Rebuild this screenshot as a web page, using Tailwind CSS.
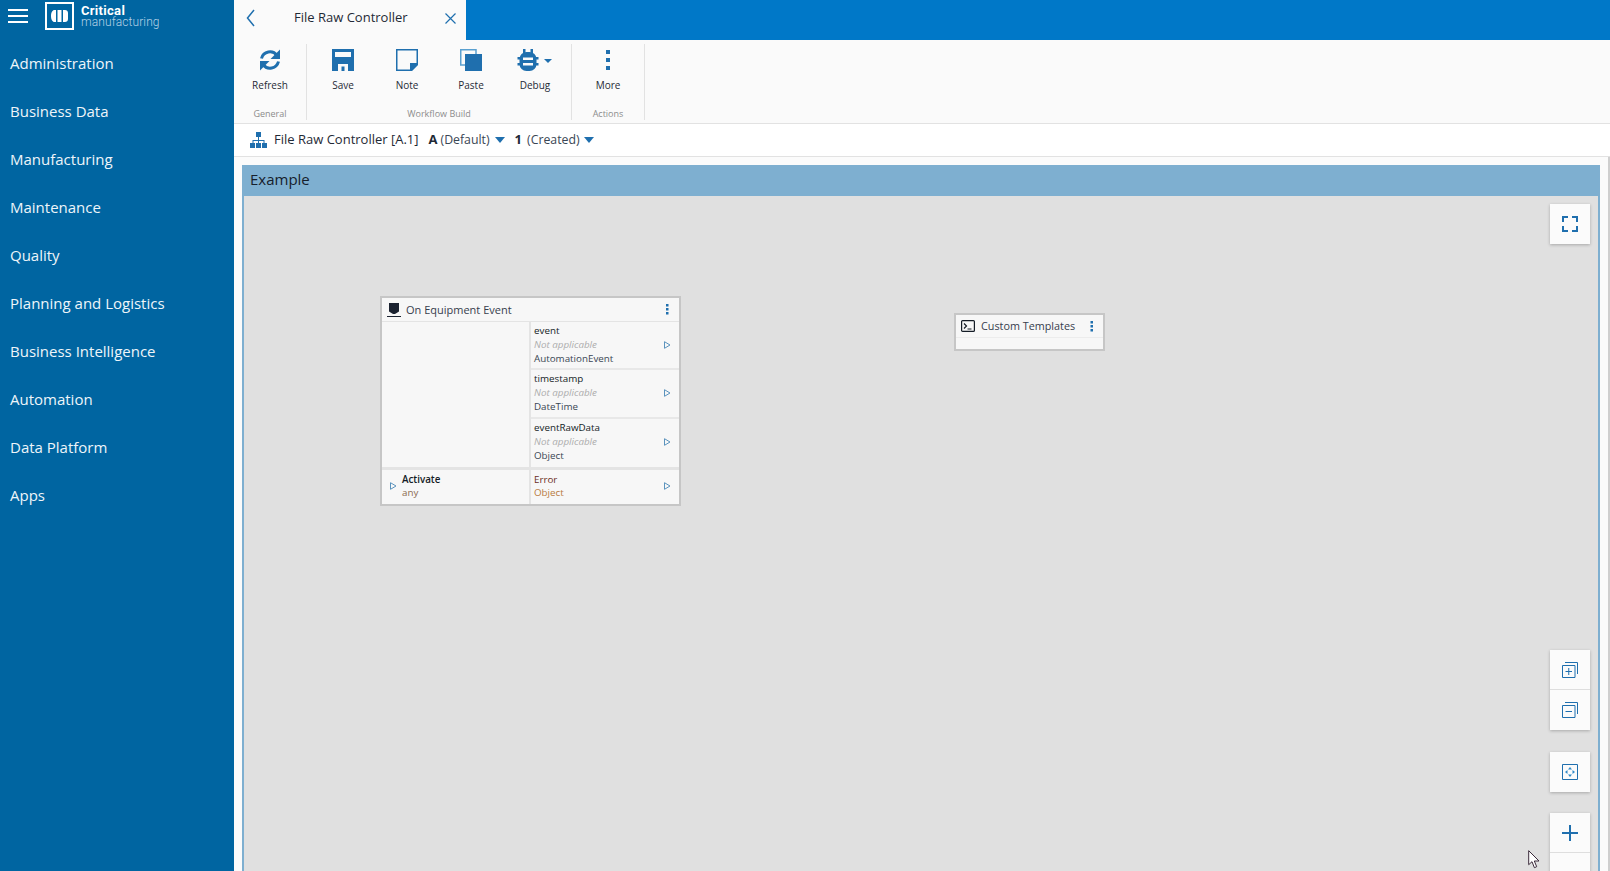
<!DOCTYPE html>
<html lang="en">
<head>
    <meta charset="UTF-8">
    <title>File Raw Controller</title>
    <script src="https://cdn.jsdelivr.net/npm/@tailwindcss/browser@4"></script>
</head>
<body class="bg-[#fafafa] text-[#1f2a36] font-['Open_Sans',sans-serif] overflow-hidden">
<div class="flex h-[871px] w-[1610px] overflow-hidden">

    <!-- Sidebar -->
    <aside class="w-[234px] shrink-0 bg-[#0065a1] text-white">
        <div class="h-[39px] flex items-start">
            <div class="w-[45px] pl-2 pt-[9px] flex flex-col gap-1">
                <span class="block w-5 h-0.5 bg-white"></span>
                <span class="block w-5 h-0.5 bg-white"></span>
                <span class="block w-5 h-0.5 bg-white"></span>
            </div>
            <div class="mt-0.5 w-[29px] h-[28px] border-2 border-white flex items-center justify-center">
                <svg width="17" height="12" viewBox="0 0 17 12" fill="#fff"><path d="M5 0v12H3.500C1.500 12 0 9.500 0 6s1.500-6 3.500-6zM6.500 0h4v12h-4zM12 0h2c1.800 0 3 1 3 3v6c0 2-1.200 3-3 3h-2z"/></svg>
            </div>
            <div class="ml-[7px] mt-[5px]">
                <div class="text-[13px] leading-[11px] font-bold font-['Roboto',sans-serif] tracking-[0.3px]">Critical</div>
                <div class="text-[12px] leading-3 font-light font-['Roboto',sans-serif] text-[#b5d2e6] tracking-[0.1px]">manufacturing</div>
            </div>
        </div>
        <nav class="text-[15px] text-[#eef5fa]">
            <a class="flex items-center pl-2.5 h-12">Administration</a>
            <a class="flex items-center pl-2.5 h-12">Business Data</a>
            <a class="flex items-center pl-2.5 h-12">Manufacturing</a>
            <a class="flex items-center pl-2.5 h-12">Maintenance</a>
            <a class="flex items-center pl-2.5 h-12">Quality</a>
            <a class="flex items-center pl-2.5 h-12">Planning and Logistics</a>
            <a class="flex items-center pl-2.5 h-12">Business Intelligence</a>
            <a class="flex items-center pl-2.5 h-12">Automation</a>
            <a class="flex items-center pl-2.5 h-12">Data Platform</a>
            <a class="flex items-center pl-2.5 h-12">Apps</a>
        </nav>
    </aside>

    <!-- Main -->
    <main class="flex-1 min-w-0 flex flex-col">
        <!-- Tab bar -->
        <div class="h-10 shrink-0 bg-[#0078c8]">
            <div class="w-[232px] h-10 pb-1 bg-[#fafafa] flex items-center">
                <svg class="ml-3" width="9" height="18" viewBox="0 0 9 18" fill="none" stroke="#1f6fae" stroke-width="1.500"><path d="M8 1L1.500 9 8 17"/></svg>
                <span class="ml-[39px] text-[13px]">File Raw Controller</span>
                <svg class="ml-[37px]" width="11" height="11" viewBox="0 0 11 11" fill="none" stroke="#1f6fae" stroke-width="1.200"><path d="M.5.500l10 10M10.500.500l-10 10"/></svg>
            </div>
        </div>

        <!-- Ribbon -->
        <div class="h-[84px] shrink-0 border-b border-[#e2e2e2] flex pt-1">
            <div class="px-1 border-r border-[#e2e2e2] h-[76px] flex flex-col">
                <div class="flex">
                    <div class="w-16 flex flex-col items-center">
                        <svg class="mt-1" width="24" height="24" viewBox="0 0 24 24" fill="none" stroke="#1f6fae" stroke-width="3"><path d="M3.500 10.500A8.700 8.700 0 0 1 19 7.500"/><path fill="#1f6fae" stroke="none" d="M22 1.500V11h-9.500z"/><path d="M20.500 13.500A8.700 8.700 0 0 1 5 16.500"/><path fill="#1f6fae" stroke="none" d="M2 22.500V13h9.500z"/></svg>
                        <span class="mt-1.5 text-[10px] leading-[14px]">Refresh</span>
                    </div>
                </div>
                <span class="mt-auto text-center text-[9px] leading-3 text-[#8c8c8c]">General</span>
            </div>
            <div class="px-1 border-r border-[#e2e2e2] h-[76px] flex flex-col">
                <div class="flex">
                    <div class="w-16 flex flex-col items-center">
                        <svg class="mt-1" width="24" height="24" viewBox="0 0 24 24"><path fill="#1f6fae" d="M1 1h22v22H1z"/><path fill="#fafafa" d="M4 4h16v5H4zM7 16h10v7H7z"/><path fill="#1f6fae" d="M10.500 18.500h3v4.500h-3z"/></svg>
                        <span class="mt-1.5 text-[10px] leading-[14px]">Save</span>
                    </div>
                    <div class="w-16 flex flex-col items-center">
                        <svg class="mt-1" width="24" height="24" viewBox="0 0 24 24" fill="none"><path stroke="#1f6fae" stroke-width="1.500" d="M1.750 1.750h20.500v14.500l-6 6H1.750z"/><path fill="#1f6fae" d="M23 15v2l-6 6h-2v-8z"/></svg>
                        <span class="mt-1.5 text-[10px] leading-[14px]">Note</span>
                    </div>
                    <div class="w-16 flex flex-col items-center">
                        <svg class="mt-1" width="24" height="24" viewBox="0 0 24 24"><path fill="none" stroke="#5aa0d0" stroke-width="1.500" d="M6 17H1.750V1.750H17V6"/><path fill="#1f6fae" d="M6 6h17v17H6z"/></svg>
                        <span class="mt-1.5 text-[10px] leading-[14px]">Paste</span>
                    </div>
                    <div class="w-16 flex flex-col items-center">
                        <div class="flex items-start">
                            <svg class="mt-1 ml-[-3px]" width="24" height="24" viewBox="0 0 24 24" fill="#1f6fae"><rect x="3.500" y="4" width="17" height="19" rx="7"/><path d="M7 1h2.500v4H7zM14.500 1H17v4h-2.500zM1.500 9h3v2.500h-3zM19.500 9h3v2.500h-3zM1.500 15h3v2.500h-3zM19.500 15h3v2.500h-3z"/><path fill="#fafafa" d="M7 9.500h10v2.500H7zM7 15h10v2.500H7z"/></svg>
                            <svg class="mt-[15px] ml-1" width="8" height="4" viewBox="0 0 8 4" fill="#1f6fae"><path d="M0 0h8L4 4z"/></svg>
                        </div>
                        <span class="mt-1.5 text-[10px] leading-[14px]">Debug</span>
                    </div>
                </div>
                <span class="mt-auto text-center text-[9px] leading-3 text-[#8c8c8c]">Workflow Build</span>
            </div>
            <div class="px-1 border-r border-[#e2e2e2] h-[76px] flex flex-col">
                <div class="flex">
                    <div class="w-16 flex flex-col items-center">
                        <svg class="mt-1" width="24" height="24" viewBox="0 0 24 24" fill="#1f6fae"><path d="M10 2h4v4h-4zM10 10h4v4h-4zM10 18h4v4h-4z"/></svg>
                        <span class="mt-1.5 text-[10px] leading-[14px]">More</span>
                    </div>
                </div>
                <span class="mt-auto text-center text-[9px] leading-3 text-[#8c8c8c]">Actions</span>
            </div>
        </div>

        <!-- Breadcrumb -->
        <div class="h-[33px] shrink-0 border-b border-[#e2e2e2] bg-white flex items-center pl-4 text-[13px]">
            <svg width="17" height="16" viewBox="0 0 17 16" fill="#1f6fae"><path d="M6 0h5v5H6zM8 5h1v3h5.500v3h-1V9H9v2H8V9H3.500v2h-1V8H8z"/><path d="M0 11h5v5H0zM6 11h5v5H6zM12 11h5v5h-5z"/></svg>
            <span class="ml-[7px]">File Raw Controller [A.1]</span>
            <span class="ml-2.5 font-bold">A</span>
            <span class="ml-[3px] text-[#3a4654] text-[12.300px]">(Default)</span>
            <svg class="ml-[5px]" width="10" height="6" viewBox="0 0 10 6" fill="#1f6fae"><path d="M0 0h10L5 6z"/></svg>
            <span class="ml-[10px] font-bold">1</span>
            <span class="ml-[5px] text-[#3a4654] text-[12.300px]">(Created)</span>
            <svg class="ml-1" width="10" height="6" viewBox="0 0 10 6" fill="#1f6fae"><path d="M0 0h10L5 6z"/></svg>
        </div>

        <!-- Workflow panel -->
        <div class="flex-1 min-h-0 flex pl-2 pt-2 border-r-2 border-[#cfcfcf] pr-2 bg-[#fbfbfb]">
            <section class="flex-1 min-w-0 flex flex-col border-x-2 border-[#7eafd0]">
                <header class="h-[31px] shrink-0 bg-[#7eafd0] flex items-center pl-1.5 pb-0.5 text-[15px] text-[#16202c]">Example</header>
                <div class="flex-1 relative bg-[#e0e0e0] overflow-hidden">

                    <!-- On Equipment Event node -->
                    <div class="absolute left-[136px] top-[100px] w-[301px] h-[210px] border-2 border-[#c6c6c6] bg-[#f7f7f7] flex flex-col text-[9.800px] leading-[14px]">
                        <div class="h-[24px] shrink-0 border-b border-[#e4e4e4] flex items-center pl-[5px] pr-2.5 text-[11px]">
                            <svg width="14" height="14" viewBox="0 0 14 14" fill="#1b2230"><path d="M2 0h10v8.500L8 11H6L2 8.500z"/><path d="M0 13h14v1H0z"/></svg>
                            <span class="ml-[5px] text-[#37404e]">On Equipment Event</span>
                            <svg class="ml-auto" width="4" height="11" viewBox="0 0 4 11" fill="#1f6fae"><path d="M1 0h2.500v2.500H1zM1 4h2.500v2.500H1zM1 8h2.500v2.500H1z"/></svg>
                        </div>
                        <div class="flex-1 flex min-h-0">
                            <div class="w-[149px] border-r-2 border-[#e4e4e4]"></div>
                            <div class="flex-1 flex flex-col">
                                <div class="h-[48px] border-b-2 border-[#e8e8e8] flex items-center pl-[3px] pr-2">
                                    <div>
                                        <div class="text-[#141c26]">event</div>
                                        <div class="italic text-[#adadad]">Not applicable</div>
                                        <div class="text-[#3a4654]">AutomationEvent</div>
                                    </div>
                                    <svg class="ml-auto" width="7" height="8" viewBox="0 0 7 8" fill="none" stroke="#5b93bd"><path d="M.5.700L6 4 .5 7.300z"/></svg>
                                </div>
                                <div class="h-[49px] border-b-2 border-[#e8e8e8] flex items-center pl-[3px] pr-2 pb-px">
                                    <div>
                                        <div class="text-[#141c26]">timestamp</div>
                                        <div class="italic text-[#adadad]">Not applicable</div>
                                        <div class="text-[#3a4654]">DateTime</div>
                                    </div>
                                    <svg class="ml-auto" width="7" height="8" viewBox="0 0 7 8" fill="none" stroke="#5b93bd"><path d="M.5.700L6 4 .5 7.300z"/></svg>
                                </div>
                                <div class="flex-1 flex items-center pl-[3px] pr-2 pb-0.5">
                                    <div>
                                        <div class="text-[#141c26]">eventRawData</div>
                                        <div class="italic text-[#adadad]">Not applicable</div>
                                        <div class="text-[#3a4654]">Object</div>
                                    </div>
                                    <svg class="ml-auto" width="7" height="8" viewBox="0 0 7 8" fill="none" stroke="#5b93bd"><path d="M.5.700L6 4 .5 7.300z"/></svg>
                                </div>
                            </div>
                        </div>
                        <div class="h-[37px] shrink-0 border-t-[3px] border-[#e4e4e4] flex">
                            <div class="w-[149px] border-r-2 border-[#e4e4e4] flex items-center pl-2 pb-0.5 leading-[13px]">
                                <svg width="7" height="8" viewBox="0 0 7 8" fill="none" stroke="#5b93bd"><path d="M.5.700L6 4 .5 7.300z"/></svg>
                                <div class="ml-[5px]">
                                    <div class="text-[#141c26] font-semibold">Activate</div>
                                    <div class="text-[#8a6a50]">any</div>
                                </div>
                            </div>
                            <div class="flex-1 flex items-center pl-[3px] pr-2 pb-0.5 leading-[13px]">
                                <div>
                                    <div class="text-[#6b2f1c]">Error</div>
                                    <div class="text-[#b97b42]">Object</div>
                                </div>
                                <svg class="ml-auto" width="7" height="8" viewBox="0 0 7 8" fill="none" stroke="#5b93bd"><path d="M.5.700L6 4 .5 7.300z"/></svg>
                            </div>
                        </div>
                    </div>

                    <!-- Custom Templates node -->
                    <div class="absolute left-[710px] top-[117px] w-[151px] h-[38px] border-2 border-[#c6c6c6] bg-[#f7f7f7]">
                        <div class="h-[23px] border-b border-[#ececec] flex items-center pl-[5px] pr-[9px] text-[10.800px] text-[#37404e]">
                            <svg width="14" height="12" viewBox="0 0 14 12" fill="none" stroke="#141c26" stroke-width="1.200"><rect x=".6" y=".6" width="12.800" height="10.800" rx="1"/><path d="M3 3.500L5.500 6 3 8.500M6.500 9h4"/></svg>
                            <span class="ml-[6px]">Custom Templates</span>
                            <svg class="ml-auto" width="4" height="11" viewBox="0 0 4 11" fill="#1f6fae"><path d="M.5 0H3v2.500H.5zM.5 4H3v2.500H.5zM.5 8H3v2.500H.5z"/></svg>
                        </div>
                    </div>

                    <!-- Canvas controls -->
                    <div class="absolute left-[1306px] top-[8px] w-10 h-10 bg-[#fbfbfb] shadow-[0_1px_3px_rgba(0,0,0,0.25)] flex items-center justify-center">
                        <svg width="16" height="16" viewBox="0 0 16 16" fill="none" stroke="#1f6fae" stroke-width="2"><path d="M1 6V1h5M10 1h5v5M15 10v5h-5M6 15H1v-5"/></svg>
                    </div>
                    <div class="absolute left-[1306px] top-[454px] w-10 bg-[#fbfbfb] shadow-[0_1px_3px_rgba(0,0,0,0.25)]">
                        <div class="h-10 border-b border-[#dedede] flex items-center justify-center">
                            <svg width="16" height="16" viewBox="0 0 16 16" fill="none" stroke="#1f6fae"><path d="M3 .5h12.500V12"/><path d="M.5 3.500h12.500v12H.5z"/><path d="M3.500 9.500h6.500M6.750 6v7"/></svg>
                        </div>
                        <div class="h-10 flex items-center justify-center">
                            <svg width="16" height="16" viewBox="0 0 16 16" fill="none" stroke="#1f6fae"><path d="M3 .5h12.500V12"/><path d="M.5 3.500h12.500v12H.5z"/><path d="M3.500 9.500h6.500"/></svg>
                        </div>
                    </div>
                    <div class="absolute left-[1306px] top-[556px] w-10 h-10 bg-[#fbfbfb] shadow-[0_1px_3px_rgba(0,0,0,0.25)] flex items-center justify-center">
                        <svg width="16" height="16" viewBox="0 0 16 16"><path fill="none" stroke="#1f6fae" d="M.5.500h15v15H.5z"/><path fill="#2f8ac9" d="M8 3l2 2.500H6zM8 13l-2-2.500h4zM3 8l2.500-2v4zM13 8l-2.500 2V6z"/></svg>
                    </div>
                    <div class="absolute left-[1306px] top-[617px] w-10 bg-[#fbfbfb] shadow-[0_1px_3px_rgba(0,0,0,0.25)]">
                        <div class="h-10 border-b border-[#dedede] flex items-center justify-center">
                            <svg width="16" height="16" viewBox="0 0 16 16" fill="#1f6fae"><path d="M7 0h2v16H7z"/><path d="M0 7h16v2H0z"/></svg>
                        </div>
                        <div class="h-10"></div>
                    </div>

                    <!-- Mouse pointer -->
                    <svg class="absolute left-[1284px] top-[654px]" width="13" height="19" viewBox="0 0 13 19" fill="#fff" stroke="#3a2a3a"><path d="M.7.700v14l3.300-3 2.400 6 2.300-1-2.400-5.700h4.700z"/></svg>
                </div>
            </section>
        </div>
    </main>
</div>
</body>
</html>
